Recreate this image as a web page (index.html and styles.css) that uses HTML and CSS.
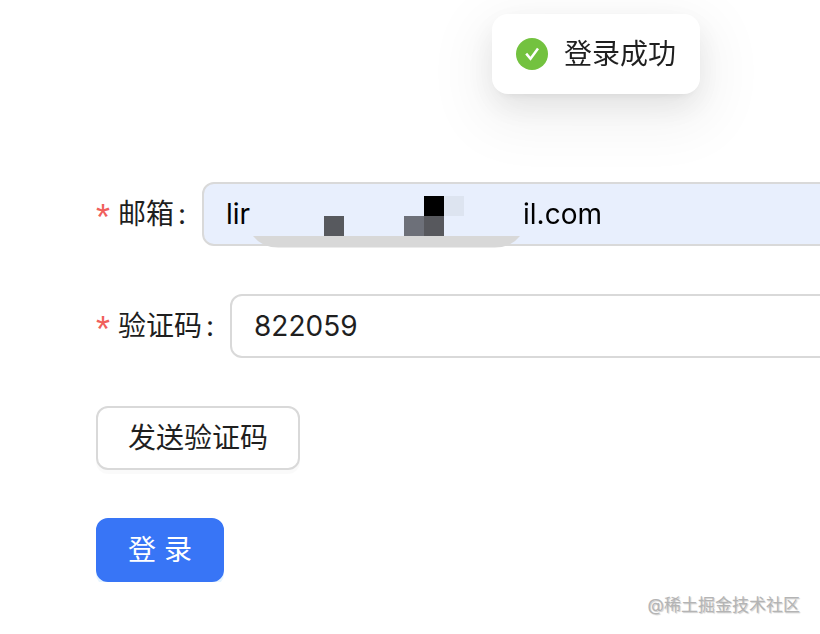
FILE: index.html
```html
<!DOCTYPE html>
<html lang="zh-CN">
<head>
    <meta charset="UTF-8">
    <meta name="viewport" content="width=device-width, initial-scale=1.0">
    <title>登录</title>
    <link rel="stylesheet" href="styles.css">
</head>
<body>
    <div class="message" role="status">
        <svg class="message-icon" viewBox="0 0 32 32" aria-hidden="true">
            <circle cx="16" cy="16" r="16" fill="#73c23f"/>
            <path d="M10.2 15.6 L14.5 20.8 L22 10.6" fill="none" stroke="#fff" stroke-width="2.5"/>
        </svg>
        <span>登录成功</span>
    </div>

    <form class="login-form" onsubmit="return false">
        <div class="form-item">
            <label for="email"><span class="required">*</span>邮箱<span class="colon">:</span></label>
            <div class="field">
                <input type="text" id="email" name="email" class="autofill" value="lir">
                <!-- adresse masquée -->
                <div class="mask">
                    <svg viewBox="0 0 271 52" aria-hidden="true">
                        <path d="M1 40 H268 Q259 51.5 243 51.5 H26 Q10 51.5 1 40 Z" fill="#d8d8d8"/>
                        <rect x="72" y="20" width="20" height="20" fill="#57595e"/>
                        <rect x="152" y="20" width="20" height="20" fill="#6d7079"/>
                        <rect x="172" y="20" width="20" height="20" fill="#57585d"/>
                        <rect x="172" y="0" width="20" height="20" fill="#000"/>
                        <rect x="192" y="0" width="20" height="20" fill="#dde4f0"/>
                    </svg>
                    <span>il.com</span>
                </div>
            </div>
        </div>

        <div class="form-item">
            <label for="code"><span class="required">*</span>验证码<span class="colon">:</span></label>
            <div class="field">
                <input type="text" id="code" name="code" value="822059">
            </div>
        </div>

        <div class="form-item">
            <button type="button" class="btn">发送验证码</button>
        </div>

        <div class="form-item">
            <button type="submit" class="btn btn-primary">登 录</button>
        </div>
    </form>

    <footer class="watermark">@稀土掘金技术社区</footer>
</body>
</html>
```

FILE: styles.css
```css
* {
    box-sizing: border-box;
}

body {
    margin: 0;
    padding: 0;
    font-family: Inter, "Noto Sans CJK SC", sans-serif;
    font-size: 28px;
    line-height: 40px;
    color: #1f1f1f;
    background-color: #fff;
    overflow-x: hidden;
}

.message {
    position: fixed;
    top: 14px;
    left: 60%;
    display: flex;
    align-items: center;
    gap: 16px;
    padding: 20px 24px;
    border-radius: 16px;
    background-color: #fff;
    white-space: nowrap;
    box-shadow: 0 12px 32px rgba(0, 0, 0, 0.08), 0 6px 12px -8px rgba(0, 0, 0, 0.12), 0 18px 56px 16px rgba(0, 0, 0, 0.05);
}

.message-icon {
    width: 32px;
    height: 32px;
}

.login-form {
    display: flex;
    flex-direction: column;
    gap: 48px;
    padding: 182px 0 0 96px;
    overflow: hidden;
}

.form-item {
    display: flex;
    align-items: center;
}

.form-item label {
    display: flex;
    align-items: center;
    white-space: nowrap;
}

.required {
    width: 14px;
    margin-right: 8px;
    padding-top: 8px;
    font-family: "Liberation Sans", sans-serif;
    font-size: 36px;
    line-height: 28px;
    color: #f0605c;
}

.colon {
    width: 8px;
    margin: 0 16px 0 4px;
}

/* le champ continue au-delà du bord droit */
.field {
    position: relative;
    flex: 1;
    margin-right: -20px;
}

.field input {
    display: block;
    width: 100%;
    height: 64px;
    padding: 0 22px;
    border: 2px solid #d9d9d9;
    border-radius: 12px;
    font: inherit;
    color: #1f1f1f;
    background-color: #fff;
    outline: none;
}

.field input.autofill {
    color: #000;
    background-color: #e8effd;
}

.mask {
    position: absolute;
    top: 14px;
    left: 50px;
    display: flex;
    color: #000;
    pointer-events: none;
}

.mask svg {
    width: 271px;
    height: 52px;
}

.mask span {
    line-height: 36px;
}

.btn {
    height: 64px;
    padding: 0 30px;
    border: 2px solid #d9d9d9;
    border-radius: 12px;
    font: inherit;
    color: #1f1f1f;
    background-color: #fff;
    box-shadow: 0 4px 0 rgba(0, 0, 0, 0.02);
    cursor: pointer;
}

.btn-primary {
    border-color: #3875f6;
    color: #fff;
    background-color: #3875f6;
    box-shadow: 0 4px 0 rgba(5, 145, 255, 0.1);
}

.watermark {
    padding: 10px 20px;
    font-size: 17px;
    line-height: 26px;
    text-align: right;
    color: #b4b4b4;
    text-shadow: 1px 1px 1px rgba(0, 0, 0, 0.2);
}
```
